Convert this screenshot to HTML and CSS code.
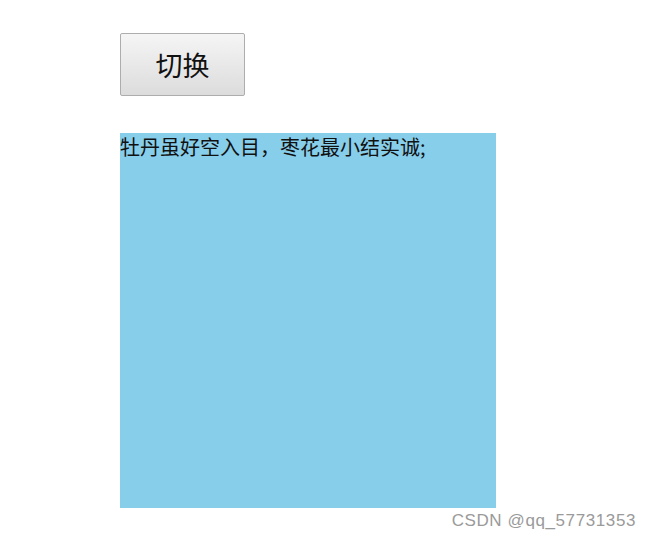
FILE: index.html
```html
<!DOCTYPE html>
<html lang="zh">
<head>
  <meta charset="UTF-8" />
  <meta name="viewport" content="width=device-width, initial-scale=1.0" />
  <title>切换</title>
  <link rel="stylesheet" href="styles.css">
</head>
<body>
  <div class="page">
    <button class="switch-btn">切换</button>
    <div class="poem-box">牡丹虽好空入目，枣花最小结实诚;</div>
  </div>
  <div class="watermark">CSDN @qq_57731353</div>
</body>
</html>
```

FILE: styles.css
```css
body {
  margin: 0;
  background: #fff;
  font-family: "Noto Sans CJK SC", "Liberation Sans", sans-serif;
}

.page {
  padding: 33px 0 0 120px;
  display: flex;
  flex-direction: column;
  align-items: flex-start;
  gap: 37px;
}

.switch-btn {
  width: 125px;
  height: 63px;
  padding: 0;
  font-family: "Noto Sans CJK SC", sans-serif;
  font-size: 27px;
  color: #111;
  background: linear-gradient(#f5f5f5, #dcdcdc);
  border: 1px solid #adadad;
  border-radius: 2px;
}

.poem-box {
  width: 376px;
  height: 375px;
  background: #87ceeb;
  color: #111;
  font-size: 20px;
  line-height: 28px;
}

.watermark {
  position: absolute;
  right: 15px;
  top: 511px;
  font-family: "Liberation Sans", sans-serif;
  font-size: 17px;
  letter-spacing: 0.6px;
  color: #9a9a9a;
}
```
